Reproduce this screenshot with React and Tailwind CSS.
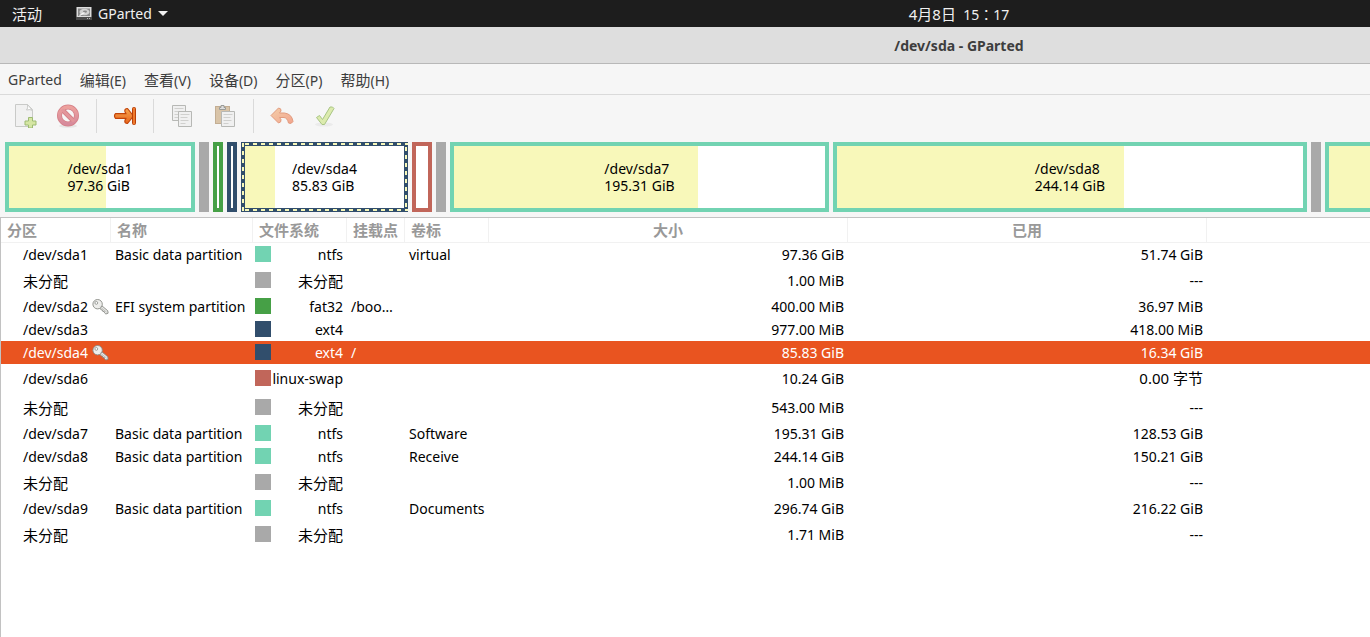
import React from "react";

const MENU = [
  { label: "GParted" },
  { cjk: "编辑", key: "(E)" },
  { cjk: "查看", key: "(V)" },
  { cjk: "设备", key: "(D)" },
  { cjk: "分区", key: "(P)" },
  { cjk: "帮助", key: "(H)" },
];

const BLOCKS = [
  { id: "sda1", name: "/dev/sda1", size: "97.36 GiB", cls: "grow-[190] shrink basis-[190px] border-4 border-[#72d3b2]", used: 53.3 },
  { id: "free1", cls: "w-2.5 shrink-0 bg-[#a9a9a9]" },
  { id: "sda2", cls: "w-2.5 shrink-0 border-4 border-[#46a046]" },
  { id: "sda3", cls: "w-2.5 shrink-0 border-4 border-[#314e6c]" },
  { id: "sda4", name: "/dev/sda4", size: "85.83 GiB", cls: "grow-[167] shrink basis-[167px] bg-[#314e6c] p-1", used: 19, selected: true },
  { id: "sda6", cls: "w-5 shrink-0 border-4 border-[#c1665a]" },
  { id: "free2", cls: "w-2.5 shrink-0 bg-[#a9a9a9]" },
  { id: "sda7", name: "/dev/sda7", size: "195.31 GiB", cls: "grow-[379] shrink basis-[379px] border-4 border-[#72d3b2]", used: 65.8 },
  { id: "sda8", name: "/dev/sda8", size: "244.14 GiB", cls: "grow-[474] shrink basis-[474px] border-4 border-[#72d3b2]", used: 61.6 },
  { id: "free3", cls: "w-2.5 shrink-0 bg-[#a9a9a9]" },
  { id: "sda9", cls: "grow-[45] shrink basis-[45px] border-4 border-r-0 border-[#72d3b2]", used: 100 },
];

const NTFS = "bg-[#72d3b2]";
const FREE = "bg-[#a9a9a9]";
const EXT4 = "bg-[#314e6c]";

const ROWS = [
  { part: "/dev/sda1", name: "Basic data partition", color: NTFS, fs: "ntfs", label: "virtual", size: "97.36 GiB", used: "51.74 GiB" },
  { part: "未分配", color: FREE, fs: "未分配", size: "1.00 MiB", used: "---", tall: true },
  { part: "/dev/sda2", locked: true, name: "EFI system partition", color: "bg-[#46a046]", fs: "fat32", mount: "/boo…", size: "400.00 MiB", used: "36.97 MiB" },
  { part: "/dev/sda3", color: EXT4, fs: "ext4", size: "977.00 MiB", used: "418.00 MiB" },
  { part: "/dev/sda4", locked: true, color: EXT4, fs: "ext4", mount: "/", size: "85.83 GiB", used: "16.34 GiB", selected: true },
  { part: "/dev/sda6", color: "bg-[#c1665a]", fs: "linux-swap", size: "10.24 GiB", used: "0.00 字节", tall: true },
  { part: "未分配", color: FREE, fs: "未分配", size: "543.00 MiB", used: "---", tall: true },
  { part: "/dev/sda7", name: "Basic data partition", color: NTFS, fs: "ntfs", label: "Software", size: "195.31 GiB", used: "128.53 GiB" },
  { part: "/dev/sda8", name: "Basic data partition", color: NTFS, fs: "ntfs", label: "Receive", size: "244.14 GiB", used: "150.21 GiB" },
  { part: "未分配", color: FREE, fs: "未分配", size: "1.00 MiB", used: "---", tall: true },
  { part: "/dev/sda9", name: "Basic data partition", color: NTFS, fs: "ntfs", label: "Documents", size: "296.74 GiB", used: "216.22 GiB" },
  { part: "未分配", color: FREE, fs: "未分配", size: "1.71 MiB", used: "---", tall: true },
];

function Text({ children }) {
  const hasHan = /[\u4e00-\u9fff]/.test(children || "");
  return <span className={hasHan ? "text-[15px]" : ""}>{children}</span>;
}

function DiskIcon() {
  return (
    <svg width="16" height="16" viewBox="0 0 16 16" aria-hidden="true">
      <path d="M.5 1h15v10h-15z" fill="#dcdcdc" />
      <rect x="2" y="2.500" width="12" height="7.500" fill="#8a8a8a" />
      <ellipse cx="8.500" cy="6" rx="5" ry="3.200" fill="#d2d2d2" />
      <ellipse cx="9" cy="5.600" rx="2" ry="1.200" fill="#8a8a8a" />
      <path d="M3.500 9.500L8.500 6.500" stroke="#f8f8f8" strokeWidth="1.200" />
      <rect x="0" y="11" width="16" height="3" fill="#4a4a4a" />
      <path d="M11 12.500h1M13 12.500h1" stroke="#bbb" />
    </svg>
  );
}

function KeyIcon() {
  return (
    <svg width="17" height="16" viewBox="0 0 17 16" className="shrink-0" aria-hidden="true">
      <path d="M7.600 8.800l1.800-2.400 6.400 5.400.3 2.400-2.200.8-1.400-1.200-.2-1.200-1.500-.2-.3-1.300-1.300-.2z" fill="#e9e9e7" stroke="#888a85" strokeWidth="0.9" strokeLinejoin="round" />
      <circle cx="5.600" cy="5.200" r="4.700" fill="#eeeeec" stroke="#888a85" strokeWidth="0.9" />
      <circle cx="4.300" cy="3.900" r="1.400" fill="#fff" stroke="#888a85" strokeWidth="0.8" />
      <path d="M7.800 7.500l6.800 5.700" stroke="#b5b6b2" strokeWidth="0.8" />
    </svg>
  );
}

function NewIcon() {
  return (
    <svg width="24" height="24" viewBox="0 0 24 24" aria-hidden="true">
      <path d="M2.500 .5h12l5 5v17h-17z" fill="#f1f1f1" stroke="#c9cac8" />
      <path d="M14.500.5q.8 4-1 5.500q4-1 6 .5z" fill="#fff" stroke="#c9cac8" strokeLinejoin="round" />
      <path d="M15.500 13.500h4v3.500h3.500v4h-3.500v3h-4v-3h-3.500v-4h3.500z" fill="#d5e6a3" stroke="#9dbb73" />
    </svg>
  );
}

function DeleteIcon() {
  return (
    <svg width="24" height="24" viewBox="0 0 24 24" aria-hidden="true">
      <defs>
        <linearGradient id="stop" x1="0" y1="0" x2="0" y2="1">
          <stop offset="0" stopColor="#eda19d" />
          <stop offset="1" stopColor="#d68a9c" />
        </linearGradient>
      </defs>
      <ellipse cx="12" cy="22" rx="9" ry="1.800" fill="#e6e6e6" />
      <circle cx="12" cy="11.500" r="8.500" fill="none" stroke="#d58088" strokeWidth="5" />
      <path d="M6 5.500l12 12" stroke="#d58088" strokeWidth="4.600" />
      <circle cx="12" cy="11.500" r="8.500" fill="none" stroke="url(#stop)" strokeWidth="3.400" />
      <path d="M6 5.500l12 12" stroke="#e3969b" strokeWidth="3" />
    </svg>
  );
}

function ResizeIcon() {
  return (
    <svg width="24" height="24" viewBox="0 0 24 24" aria-hidden="true">
      <defs>
        <linearGradient id="resize" x1="0" y1="0" x2="0" y2="1">
          <stop offset="0" stopColor="#f7a64f" />
          <stop offset="1" stopColor="#e8641b" />
        </linearGradient>
      </defs>
      <path d="M2.500 9.700h10.500l-1-2q-.8-3 2.500-3.200l6 7.500-6 7.500q-3.300-.2-2.500-3.200l1-2h-10.500q-2-2.300 0-4.600z" fill="url(#resize)" stroke="#c24409" strokeWidth="1.200" strokeLinejoin="round" />
      <rect x="19.500" y="3.500" width="3" height="17" rx="1" fill="#ee7a2c" stroke="#b93f08" />
    </svg>
  );
}

function Sheet({ x, y }) {
  return (
    <g>
      <path d={`M${x} ${y}h13v15h-13z`} fill="#f0f0f0" stroke="#b7b8b5" />
      <path d={`M${x + 2} ${y + 3}h9M${x + 2} ${y + 6}h7M${x + 2} ${y + 9}h8M${x + 2} ${y + 12}h5`} stroke="#d0d0ce" />
    </g>
  );
}

function CopyIcon() {
  return (
    <svg width="24" height="24" viewBox="0 0 24 24" aria-hidden="true">
      <Sheet x={2.5} y={1.5} />
      <Sheet x={8.5} y={7.5} />
    </svg>
  );
}

function PasteIcon() {
  return (
    <svg width="24" height="24" viewBox="0 0 24 24" aria-hidden="true">
      <rect x="2.500" y="2.500" width="14" height="17" fill="#d9c4a8" stroke="#c3ae93" />
      <path d="M6.500 5.500v-2h1.500v-2h3v2h1.500v2z" fill="#ddd" stroke="#999b98" />
      <Sheet x={8.5} y={7.5} />
    </svg>
  );
}

function UndoIcon() {
  return (
    <svg width="24" height="24" viewBox="0 0 24 24" aria-hidden="true">
      <defs>
        <linearGradient id="undo" x1="0" y1="0" x2="1" y2="1">
          <stop offset="0" stopColor="#f4cfa9" />
          <stop offset="1" stopColor="#f2a48e" />
        </linearGradient>
      </defs>
      <path d="M1 11.500L8.500 4q3 .3 2.500 3L9.500 9h5q7.500 1 8.500 8.500-1.500 3-4.500 1.500-1-5-4.500-5.500H9.500l1.500 2q.5 3-2.500 3.500z" fill="url(#undo)" stroke="#e29b7e" strokeLinejoin="round" />
    </svg>
  );
}

function ApplyIcon() {
  return (
    <svg width="24" height="24" viewBox="0 0 24 24" aria-hidden="true">
      <ellipse cx="11" cy="20.500" rx="9" ry="2" fill="#ebebeb" />
      <path d="M3.500 13.500l3-2 3 4 7.500-12.500h2.500l1.500 1.500-9.500 16H9z" fill="#dcebae" stroke="#a9c584" strokeLinejoin="round" />
    </svg>
  );
}

function ToolButton({ label, disabled, children }) {
  return (
    <button type="button" aria-label={label} disabled={disabled} className="flex h-9 w-9 items-center justify-center">
      {children}
    </button>
  );
}

function Separator() {
  return <div className="h-[34px] w-px bg-[#dadada]" />;
}

function Block({ block }) {
  return (
    <div className={`relative h-[70px] min-w-0 overflow-hidden ${block.cls}`}>
      {block.id.startsWith("free") ? null : (
        <div className="flex h-full bg-white">
          {block.used ? <div className="h-full bg-[#f8f8ba]" style={{ width: `${block.used}%` }} /> : null}
        </div>
      )}
      {block.selected ? (
        <svg className="absolute inset-0 h-full w-full" aria-hidden="true">
          <g stroke="#f8f8ba" strokeWidth="2" strokeDasharray="4 4">
            <line x1="4" y1="2" x2="100%" y2="2" />
            <line x1="4" y1="68" x2="100%" y2="68" />
            <line x1="2" y1="1" x2="2" y2="69" />
          </g>
          <svg x="100%" width="4" height="70" overflow="visible">
            <line x1="-2" y1="5" x2="-2" y2="69" stroke="#f8f8ba" strokeWidth="2" strokeDasharray="4 4" />
          </svg>
        </svg>
      ) : null}
      {block.name ? (
        <div className="absolute inset-0 flex items-center justify-center">
          <p className="leading-[17px]">
            {block.name}
            <br />
            {block.size}
          </p>
        </div>
      ) : null}
    </div>
  );
}

function Cell({ children, className = "" }) {
  return <td className={`overflow-hidden p-0 whitespace-nowrap ${className}`}>{children}</td>;
}

function Row({ row }) {
  return (
    <tr className={`${row.tall ? "h-[29px]" : "h-[23px]"} ${row.selected ? "bg-[#e95420] text-white" : ""}`}>
      <Cell className="pl-[22px]">
        <span className="flex items-center gap-1">
          <Text>{row.part}</Text>
          {row.locked ? <KeyIcon /> : null}
        </span>
      </Cell>
      <Cell className="pl-1">{row.name}</Cell>
      <Cell className="pr-1 pl-0.5">
        <span className="flex items-center justify-between">
          <span className={`mb-0.5 h-4 w-4 shrink-0 ${row.color}`} />
          <Text>{row.fs}</Text>
        </span>
      </Cell>
      <Cell className="pl-1">{row.mount}</Cell>
      <Cell className="pl-1">{row.label}</Cell>
      <Cell className="pr-1 text-right">{row.size}</Cell>
      <Cell className="pr-1 text-right"><Text>{row.used}</Text></Cell>
      <Cell />
    </tr>
  );
}

const HEAD = "border-r border-b border-[#f1f1f1] px-1.5 py-0 font-bold";

export default function App() {
  return (
    <div className="flex min-h-screen flex-col overflow-hidden bg-[#f6f6f6] font-['Noto_Sans','Noto_Sans_CJK_SC',sans-serif] text-sm leading-5 text-black">
      <header className="grid h-[27px] grid-cols-1 items-center overflow-hidden bg-[#1d1d1d] text-[#f0f0f0]">
        <div className="col-start-1 row-start-1 flex items-center gap-[34px] pl-3">
          <button type="button" className="text-[15px]">活动</button>
          <button type="button" className="flex items-center gap-1.5">
            <DiskIcon />
            GParted
            <svg width="10" height="5" viewBox="0 0 10 5" aria-hidden="true"><path d="M0 0h10L5 5z" fill="#f0f0f0" /></svg>
          </button>
        </div>
        <time className="col-start-1 row-start-1 w-[140%] pt-0.5 text-center">
          <Text>4月8日</Text>&nbsp; 15<span className="font-['Noto_Sans_CJK_TC',sans-serif] leading-none" lang="zh-TW">：</span>17
        </time>
      </header>

      <div className="flex h-[37px] items-center overflow-hidden border-b border-[#b8b8b8] bg-[#dedede] pt-0.5">
        <h1 className="w-[140%] shrink-0 text-center font-bold text-[#3d3d3d]">/dev/sda - GParted</h1>
      </div>

      <nav className="flex h-[31px] items-center gap-[18px] border-b border-[#dadada] px-2 pt-0.5 text-[#3d3d3d]">
        {MENU.map((item) => (
          <button type="button" key={item.label || item.cjk} className="whitespace-nowrap">
            {item.label}
            {item.cjk ? <span className="text-[15px]">{item.cjk}</span> : null}
            {item.key}
          </button>
        ))}
      </nav>

      <div className="flex h-[43px] items-center gap-2.5 pb-0.5 pl-[7px]">
        <div className="flex gap-[7px]">
          <ToolButton label="新建" disabled><NewIcon /></ToolButton>
          <ToolButton label="删除" disabled><DeleteIcon /></ToolButton>
        </div>
        <Separator />
        <ToolButton label="调整大小/移动"><ResizeIcon /></ToolButton>
        <Separator />
        <div className="flex gap-[7px]">
          <ToolButton label="复制" disabled><CopyIcon /></ToolButton>
          <ToolButton label="粘贴" disabled><PasteIcon /></ToolButton>
        </div>
        <Separator />
        <div className="flex gap-[7px]">
          <ToolButton label="撤消" disabled><UndoIcon /></ToolButton>
          <ToolButton label="应用" disabled><ApplyIcon /></ToolButton>
        </div>
      </div>

      <div className="flex gap-1 pt-1 pb-[5px] pl-[5px]">
        {BLOCKS.map((block) => <Block key={block.id} block={block} />)}
      </div>

      <main className="grow border-t border-l border-[#c2c2c2] bg-white">
        <table className="w-full table-fixed border-separate border-spacing-0">
          <colgroup>
            <col className="w-[110px]" />
            <col className="w-[142px]" />
            <col className="w-[94px]" />
            <col className="w-[58px]" />
            <col className="w-[84px]" />
            <col className="w-[359px]" />
            <col className="w-[359px]" />
            <col />
          </colgroup>
          <thead>
            <tr className="h-[25px] text-left text-[15px] whitespace-nowrap text-[#999]">
              <th className={HEAD}>分区</th>
              <th className={HEAD}>名称</th>
              <th className={HEAD}>文件系统</th>
              <th className={HEAD}>挂载点</th>
              <th className={HEAD}>卷标</th>
              <th className={`${HEAD} text-center`}>大小</th>
              <th className={`${HEAD} text-center`}>已用</th>
              <td className="border-b border-[#f1f1f1] p-0" />
            </tr>
          </thead>
          <tbody>
            {ROWS.map((row, i) => <Row key={i} row={row} />)}
          </tbody>
        </table>
      </main>
    </div>
  );
}
